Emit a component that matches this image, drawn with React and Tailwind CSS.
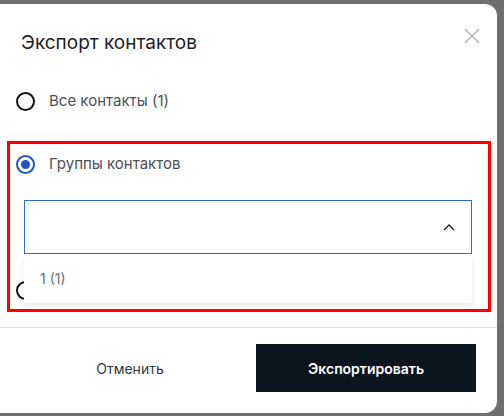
import React from "react";

function Radio({ checked, label }) {
  return (
    <div className="flex items-center h-[24px]">
      {checked ? (
        <span className="flex items-center justify-center w-[19px] h-[19px] rounded-full border-2 border-[#1f54c9]">
          <span className="w-[9px] h-[9px] rounded-full bg-[#1f54c9]" />
        </span>
      ) : (
        <span className="w-[19px] h-[19px] rounded-full border-2 border-[#111]" />
      )}
      {label && <span className="ml-[14px] text-[15px] text-[#4b4f58]">{label}</span>}
    </div>
  );
}

export default function App() {
  return (
    <div
      className="w-[504px] h-[416px] overflow-hidden bg-[#6f6f6f] pt-[4px]"
      style={{ fontFamily: "Inter, 'Noto Sans', sans-serif" }}
    >
      <div className="relative -ml-[12px] w-[509px] rounded-[12px] bg-white">
        {/* header */}
        <div className="flex justify-between items-start pt-[20px] pl-[33px] pr-[17px]">
          <h2 className="mt-[7px] text-[19px] leading-[24px] text-[#1d2129]">
            Экспорт контактов
          </h2>
          <svg width="16" height="16" viewBox="0 0 16 16" className="mt-[4px]">
            <path d="M1 1L15 15M15 1L1 15" stroke="#b3b3b3" strokeWidth="1.4" />
          </svg>
        </div>

        {/* options */}
        <div className="pl-[28px] pr-[25px] pt-[34px] pb-[25px]">
          <Radio label="Все контакты (1)" />
          <div className="mt-[39px]">
            <Radio checked label="Группы контактов" />
          </div>
          <div className="relative ml-[8px] mt-[24px] w-[448px]">
            <div className="flex justify-end items-center h-[54px] border-[1.5px] border-[#2c6cd6] pr-[16px]">
              <svg width="12" height="8" viewBox="0 0 12 8">
                <path d="M1 7L6 2L11 7" fill="none" stroke="#222" strokeWidth="1.4" />
              </svg>
            </div>
            <div className="absolute left-0 top-full z-10 w-full h-[49px] flex items-center pl-[16px] bg-white shadow-[0_4px_8px_rgba(0,0,0,0.08)] text-[14px] text-[#6b6f78]">
              1 (1)
            </div>
          </div>
          <div className="mt-[24px]">
            <Radio />
          </div>
        </div>

        {/* footer */}
        <div className="flex gap-[16px] border-t border-[#e4e4e6] pl-[32px] pr-[21px] pt-[16px] pb-[21px]">
          <button className="w-[220px] h-[48px] text-[14px] text-[#33363d]">Отменить</button>
          <button className="w-[220px] h-[48px] bg-[#0d151e] text-[14px] font-semibold text-white">
            Экспортировать
          </button>
        </div>

        {/* annotation */}
        <div className="absolute left-[19px] top-[137px] w-[484px] h-[171px] border-[3px] border-[#ff0000] pointer-events-none z-20" />
      </div>
    </div>
  );
}
